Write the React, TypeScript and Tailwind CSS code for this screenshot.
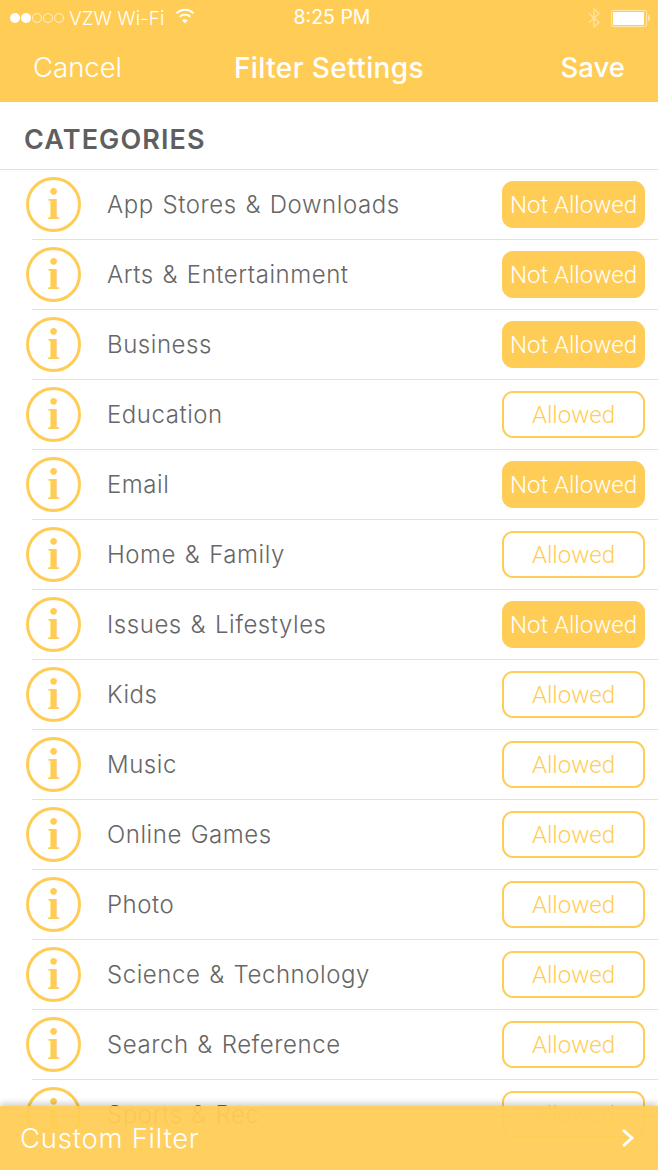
const CATEGORIES: Array<{ name: string; allowed: boolean }> = [
  { name: "App Stores & Downloads", allowed: false },
  { name: "Arts & Entertainment", allowed: false },
  { name: "Business", allowed: false },
  { name: "Education", allowed: true },
  { name: "Email", allowed: false },
  { name: "Home & Family", allowed: true },
  { name: "Issues & Lifestyles", allowed: false },
  { name: "Kids", allowed: true },
  { name: "Music", allowed: true },
  { name: "Online Games", allowed: true },
  { name: "Photo", allowed: true },
  { name: "Science & Technology", allowed: true },
  { name: "Search & Reference", allowed: true },
  { name: "Sports & Rec", allowed: true },
];

function StatusBar() {
  return (
    <div className="grid h-[36px] grid-cols-[1fr_auto_1fr] items-center pl-[10px] pr-[8px] text-white">
      <div className="flex items-center">
        <div className="flex items-center gap-px">
          <span className="h-[10px] w-[10px] rounded-full bg-white" />
          <span className="h-[10px] w-[10px] rounded-full bg-white" />
          <span className="h-[10px] w-[10px] rounded-full border border-white/70" />
          <span className="h-[10px] w-[10px] rounded-full border border-white/70" />
          <span className="h-[10px] w-[10px] rounded-full border border-white/70" />
        </div>
        <span className="ml-[5px] text-[19px] font-light leading-none">VZW Wi-Fi</span>
        <svg className="ml-[11px] -mt-[4px]" width="20" height="16" viewBox="0 0 18 15" fill="none" stroke="white" strokeWidth="1.7">
          <path d="M1 5 C5.5 0.5 12.5 0.5 17 5" />
          <path d="M4 8.2 C6.8 5.5 11.2 5.5 14 8.2" />
          <path d="M9 14.5 L6.4 11.4 C8 10.2 10 10.2 11.6 11.4 Z" fill="white" stroke="none" />
        </svg>
      </div>
      <span className="pl-[4px] text-[19.5px] font-normal leading-none">8:25 PM</span>
      <div className="flex items-center justify-end">
        <svg width="12" height="20" viewBox="0 0 12 20" fill="none" stroke="white" strokeOpacity="0.45" strokeWidth="1.3">
          <path d="M1 5.5 L11 14.5 L6 19 V1 L11 5.5 L1 14.5" />
        </svg>
        <div className="ml-[11px] flex h-[17px] w-[36px] items-center rounded-[2px] border border-white/50 p-[1px]">
          <div className="h-full w-[31px] rounded-[1px] bg-white" />
        </div>
        <span className="ml-px h-[6px] w-[2px] rounded-r-sm bg-white/50" />
      </div>
    </div>
  );
}

function InfoIcon() {
  return (
    <div className="flex h-[55px] w-[55px] shrink-0 items-center justify-center rounded-full border-[3px] border-[#ffcd56]">
      <span className="text-[44px] font-bold leading-none text-[#ffcd56] font-['Liberation_Serif',serif]">i</span>
    </div>
  );
}

function StatusButton({ allowed }: { allowed: boolean }) {
  return (
    <div
      className={`flex h-[47px] w-[143px] shrink-0 items-center justify-center rounded-[11px] border-2 border-[#ffcd56] text-[24px] font-light font-['Roboto',sans-serif] ${
        allowed ? "text-[#ffcd56]" : "bg-[#ffcd56] text-white"
      }`}
    >
      {allowed ? "Allowed" : "Not Allowed"}
    </div>
  );
}

function App() {
  return (
    <div className="relative h-[1170px] w-[658px] overflow-hidden bg-white font-['Inter',sans-serif]">
      <header className="h-[102px] bg-[#ffcd56]">
        <StatusBar />
        <div className="grid h-[64px] grid-cols-[1fr_auto_1fr] items-center px-[33px] text-white">
          <span className="text-[27.5px] font-light">Cancel</span>
          <span className="text-[28px] font-medium tracking-[0.4px]">Filter Settings</span>
          <span className="text-right text-[27.5px] font-medium">Save</span>
        </div>
      </header>

      <div className="flex h-[68px] items-center border-b border-[#e2e2e2] pl-[24px] pt-[9px]">
        <h2 className="text-[27px] font-semibold tracking-[1.1px] text-[#5f5f5f]">CATEGORIES</h2>
      </div>

      <ul>
        {CATEGORIES.map((cat) => (
          <li key={cat.name}>
            <div className="flex h-[69px] items-center pl-[26px] pr-[13px]">
              <InfoIcon />
              <span className="ml-[26px] flex-1 text-[24px] font-light tracking-[0.55px] text-[#666666] [word-spacing:1.5px]">
                {cat.name}
              </span>
              <StatusButton allowed={cat.allowed} />
            </div>
            <div className="ml-[32px] h-px bg-[#e2e2e2]" />
          </li>
        ))}
      </ul>

      <div className="absolute inset-x-0 bottom-0 flex h-[64px] items-center justify-between bg-[#ffcd56]/95 pl-[20px] pr-[24px] shadow-[0_-3px_6px_rgba(0,0,0,0.18)]">
        <span className="pt-[1px] text-[27.5px] font-light tracking-[0.75px] text-white">Custom Filter</span>
        <svg width="13" height="20" viewBox="0 0 13 20" fill="none" stroke="white" strokeWidth="3">
          <path d="M2 2 L11 10 L2 18" />
        </svg>
      </div>
    </div>
  );
}

export default App;
